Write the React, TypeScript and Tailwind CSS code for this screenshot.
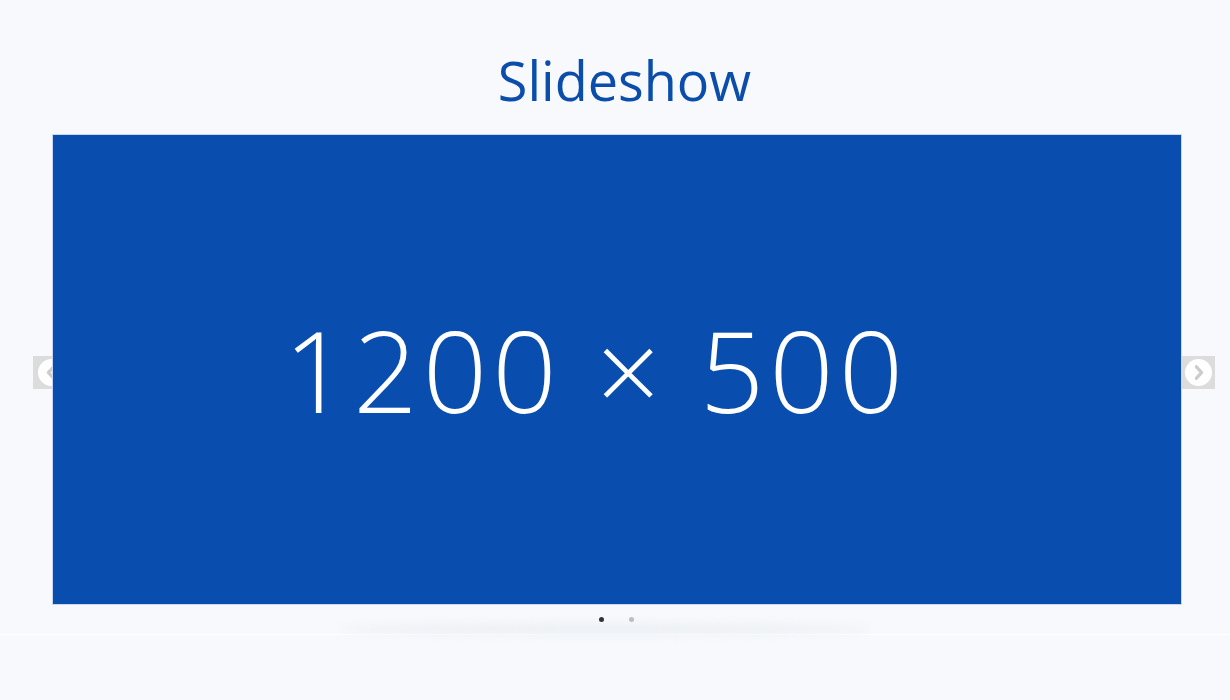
import { useState } from "react";

const slides = ["1200 × 500", "1200 × 500"];

function Arrow({ dir }: { dir: "left" | "right" }) {
  return (
    <svg width="27" height="27" viewBox="0 0 26 26">
      <circle cx="13" cy="13" r="13" fill="#ffffff" />
      <path
        d={dir === "left" ? "M15 7.5 L10 13 L15 18.5" : "M11 7.5 L16 13 L11 18.5"}
        fill="none"
        stroke="#cccccc"
        strokeWidth="3.2"
        strokeLinecap="round"
        strokeLinejoin="round"
      />
    </svg>
  );
}

export default function App() {
  const [active, setActive] = useState(0);

  return (
    <div className="min-h-[700px] bg-[#f7f9fc] font-['Open_Sans',sans-serif]">
      <h1 className="pt-[44px] pl-[19px] text-center text-[54px] leading-[72px] font-normal text-[#0b4dab]">Slideshow</h1>

      <div className="relative mt-[18px] border-b border-white pb-[12px]">
        <div className="relative z-10 mr-[48px] ml-[52px] border border-[#c9d8f0] bg-[#094dae]">
          <div className="flex h-[469px] items-center justify-center pr-[42px]">
            <span className="font-light text-[113px] leading-none tracking-[5px] text-white">{slides[active]}</span>
          </div>
        </div>

        <button
          onClick={() => setActive((active + slides.length - 1) % slides.length)}
          className="absolute top-[222px] left-[33px] flex h-[33px] w-[33px] items-center justify-center bg-[#dcdcdc] pl-[3px]"
        >
          <Arrow dir="left" />
        </button>
        <button
          onClick={() => setActive((active + 1) % slides.length)}
          className="absolute top-[222px] right-[15px] flex h-[33px] w-[33px] items-center justify-center bg-[#dcdcdc]"
        >
          <Arrow dir="right" />
        </button>

        <div className="pointer-events-none absolute bottom-[0px] left-[340px] h-[10px] w-[530px] rounded-[50%] bg-[#eceff3] blur-[4px]" />

        <div className="relative mt-[12px] flex justify-center gap-[25px] pl-[2px]">
          {slides.map((_, i) => (
            <button
              key={i}
              onClick={() => setActive(i)}
              className={`h-[5px] w-[5px] rounded-full ${i === active ? "bg-[#333333]" : "bg-[#bdbdbd]"}`}
            />
          ))}
        </div>
      </div>
    </div>
  );
}
